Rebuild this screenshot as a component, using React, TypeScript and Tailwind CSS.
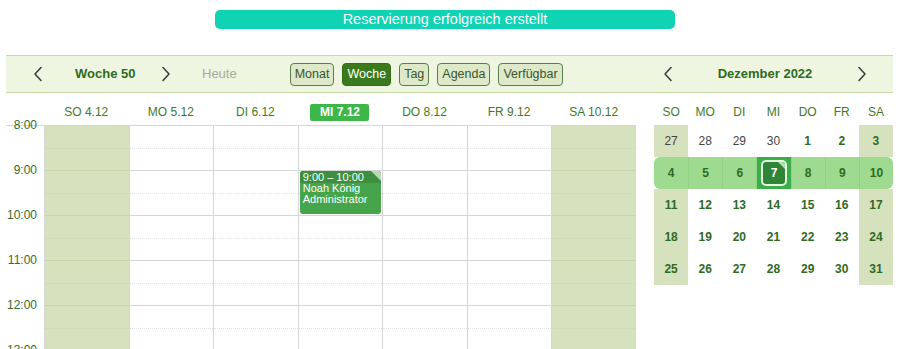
import React from "react";

const days = [
  { label: "SO 4.12", weekend: true },
  { label: "MO 5.12" },
  { label: "DI 6.12" },
  { label: "MI 7.12", today: true },
  { label: "DO 8.12" },
  { label: "FR 9.12" },
  { label: "SA 10.12", weekend: true },
];

const hours = ["8:00", "9:00", "10:00", "11:00", "12:00", "13:00"];

const views = ["Monat", "Woche", "Tag", "Agenda", "Verfügbar"];

const miniHead = ["SO", "MO", "DI", "MI", "DO", "FR", "SA"];

const miniWeeks = [
  ["27", "28", "29", "30", "1", "2", "3"],
  ["4", "5", "6", "7", "8", "9", "10"],
  ["11", "12", "13", "14", "15", "16", "17"],
  ["18", "19", "20", "21", "22", "23", "24"],
  ["25", "26", "27", "28", "29", "30", "31"],
];

function cn(...classes: Array<string | false | null | undefined>) {
  return classes.filter(Boolean).join(" ");
}

function Chevron({ dir }: { dir: "left" | "right" }) {
  return (
    <svg width="10" height="16" viewBox="0 0 10 16" className="text-[#3a3a3a]">
      <polyline
        points={dir === "left" ? "8,1.5 2,8 8,14.5" : "2,1.5 8,8 2,14.5"}
        fill="none"
        stroke="currentColor"
        strokeWidth="1.5"
        strokeLinecap="round"
        strokeLinejoin="round"
      />
    </svg>
  );
}

function WeekColumn({ weekend, today }: { weekend?: boolean; today?: boolean }) {
  return (
    <div
      className={cn(
        "relative border-l border-[#d6d6d6]",
        weekend && "bg-[#d6e2be]",
      )}
    >
      {Array.from({ length: 12 }).map((_, i) => (
        <div
          key={i}
          className={cn(
            "h-[22.5px] border-b",
            i % 2 === 0
              ? weekend
                ? "border-dotted border-[#cbd9b2]"
                : "border-dotted border-[#e4e4e4]"
              : weekend
                ? "border-[#c8d6ae]"
                : "border-[#d6d6d6]",
          )}
        />
      ))}

      {today && (
        <div className="absolute left-px right-px top-[45px] h-[43px] overflow-hidden rounded-[3px] bg-[#46a54b] text-white">
          <div className="h-[12px] bg-[#3b8f3f] pl-[3px] text-[11px] leading-[12px]">
            9:00 – 10:00
          </div>
          <div className="pl-[3px] text-[11px] leading-[11px]">
            <div>Noah König</div>
            <div>Administrator</div>
          </div>
          <div className="absolute right-0 top-0 h-0 w-0 border-l-[10px] border-t-[10px] border-l-transparent border-t-[#b9d8b3]" />
        </div>
      )}
    </div>
  );
}

export default function App() {
  return (
    <div
      className="h-[349px] w-[900px] overflow-hidden bg-white"
      style={{ fontFamily: '"Liberation Sans", Arial, sans-serif' }}
    >
      <div className="pl-[215px] pt-[10px]">
        <div className="flex h-[19px] w-[460px] items-center justify-center rounded-[5px] bg-[#10d3b3] text-[14.5px] text-white">
          Reservierung erfolgreich erstellt
        </div>
      </div>

      <div className="px-[6px] pt-[26px]">
        <div className="flex h-[38px] w-[887px] items-center border-y border-[#c6d8a8] bg-[#eef6e1]">
          <div className="flex w-[630px] items-center">
            <button type="button" className="ml-[27px] flex w-[10px] items-center">
              <Chevron dir="left" />
            </button>
            <div className="ml-[32px] w-[64px] text-[13px] font-bold text-[#2f6b1e]">
              Woche 50
            </div>
            <button type="button" className="ml-[22px] flex w-[10px] items-center">
              <Chevron dir="right" />
            </button>
            <div className="ml-[31px] text-[13px] text-[#a3aba0]">Heute</div>
            <div className="ml-[53px] flex items-center gap-[8px]">
              {views.map((v) => (
                <button
                  key={v}
                  type="button"
                  className={cn(
                    "h-[23px] rounded-[4px] border px-[4px] text-[12.5px]",
                    v === "Woche"
                      ? "border-[#356d17] bg-[#3b7a1c] text-white"
                      : "border-[#5b7d4c] bg-[#dde9c9] text-[#3a5530]",
                  )}
                >
                  {v}
                </button>
              ))}
            </div>
          </div>

          <div className="ml-[18px] flex w-[239px] items-center">
            <button type="button" className="ml-[9px] flex w-[10px] items-center">
              <Chevron dir="left" />
            </button>
            <div className="flex-1 text-center text-[13px] font-bold text-[#2f6b1e]">
              Dezember 2022
            </div>
            <button type="button" className="mr-[26px] flex w-[10px] items-center">
              <Chevron dir="right" />
            </button>
          </div>
        </div>

        <div className="flex">
          <div className="w-[630px]">
            <div className="ml-[38px] grid h-[32px] grid-cols-7 pt-[6px]">
              {days.map((d) => (
                <div key={d.label} className="flex items-center justify-center">
                  {d.today ? (
                    <span className="flex h-[17px] w-[59px] items-center justify-center rounded-[2px] bg-[#3db64a] text-[12px] font-bold text-white">
                      {d.label}
                    </span>
                  ) : (
                    <span className="text-[12px] text-[#3e7a2c]">{d.label}</span>
                  )}
                </div>
              ))}
            </div>

            <div className="flex border-t border-[#d6d6d6]">
              <div className="w-[38px] pr-[7px]">
                {hours.map((h) => (
                  <div
                    key={h}
                    className="h-[45px] -translate-y-[8px] text-right text-[12px] leading-[14px] text-[#3a6a2a]"
                  >
                    {h}
                  </div>
                ))}
              </div>
              <div className="grid flex-1 grid-cols-7">
                {days.map((d) => (
                  <WeekColumn key={d.label} weekend={d.weekend} today={d.today} />
                ))}
              </div>
            </div>
          </div>

          <div className="ml-[18px] w-[239px]">
            <div className="grid h-[32px] grid-cols-7 pt-[6px]">
              {miniHead.map((h) => (
                <div
                  key={h}
                  className="flex items-center justify-center text-[12px] text-[#3e7a2c]"
                >
                  {h}
                </div>
              ))}
            </div>

            {miniWeeks.map((week, wi) => {
              const current = wi === 1;
              return (
                <div
                  key={wi}
                  className={cn(
                    "grid h-[32px] grid-cols-7",
                    current && "rounded-[6px] bg-[#9edb90]",
                  )}
                >
                  {week.map((n, di) => {
                    const outside = wi === 0 && di < 4;
                    const weekend = di === 0 || di === 6;
                    const today = current && n === "7";
                    return (
                      <div
                        key={di}
                        className={cn(
                          "flex items-center justify-center text-[12px]",
                          !current && weekend && "bg-[#d6e2be]",
                          current && di > 0 && "border-l border-[#94d186]",
                          today && "bg-[#3aae48]",
                          outside
                            ? "text-[#444]"
                            : "font-bold text-[#2f6b1e]",
                        )}
                      >
                        {today ? (
                          <span className="relative flex h-[26px] w-[26px] items-center justify-center overflow-hidden rounded-[5px] border-2 border-[#e6f4e2] bg-[#2f8536] font-bold text-white">
                            7
                            <span className="absolute right-0 top-0 h-0 w-0 border-l-[7px] border-t-[7px] border-l-transparent border-t-[#b8dab1]" />
                          </span>
                        ) : (
                          n
                        )}
                      </div>
                    );
                  })}
                </div>
              );
            })}
          </div>
        </div>
      </div>
    </div>
  );
}
